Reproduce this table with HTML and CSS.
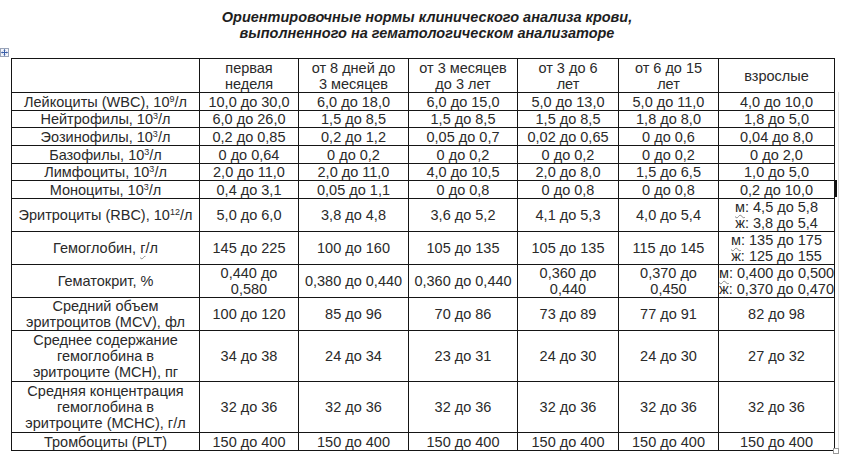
FILE: index.html
```html
<!DOCTYPE html>
<html lang="ru">
<head>
<meta charset="utf-8">
<title>Нормы анализа крови</title>
<link rel="stylesheet" href="styles.css">
</head>
<body>
<div class="page">
  <h1 class="title">Ориентировочные нормы клинического анализа крови,<br>выполненного на гематологическом анализаторе</h1>
  <div class="table-wrap">
    <span class="handle"><svg width="9" height="9" viewBox="0 0 9 9"><rect x="0.5" y="0.5" width="8" height="8" fill="#f4f6fb" stroke="#9aa4b8"/><path d="M4.5 1.5v6M1.5 4.5h6" stroke="#3a5ea8" stroke-width="1"/><path d="M4.5 1.2l-1.3 1.3h2.6zM4.5 7.8l-1.3-1.3h2.6zM1.2 4.5l1.3-1.3v2.6zM7.8 4.5l-1.3-1.3v2.6z" fill="#3a5ea8"/></svg></span>
    <table class="norms">
      <colgroup>
        <col class="c-name"><col class="c1"><col class="c2"><col class="c3"><col class="c4"><col class="c5"><col class="c6">
      </colgroup>
      <tr class="r-head">
        <td></td><td>первая<br>неделя</td><td>от 8 дней до<br>3 месяцев</td><td>от 3 месяцев<br>до 3 лет</td><td>от 3 до 6<br>лет</td><td>от 6 до 15<br>лет</td><td>взрослые</td>
      </tr>
      <tr class="r-a"><td>Лейкоциты (WBC), 10<sup>9</sup>/л</td><td>10,0 до 30,0</td><td>6,0 до 18,0</td><td>6,0 до 15,0</td><td>5,0 до 13,0</td><td>5,0 до 11,0</td><td>4,0 до 10,0</td></tr>
      <tr class="r-b"><td>Нейтрофилы, 10<sup>3</sup>/л</td><td>6,0 до 26,0</td><td>1,5 до 8,5</td><td>1,5 до 8,5</td><td>1,5 до 8,5</td><td>1,8 до 8,0</td><td>1,8 до 5,0</td></tr>
      <tr class="r-a"><td>Эозинофилы, 10<sup>3</sup>/л</td><td>0,2 до 0,85</td><td>0,2 до 1,2</td><td>0,05 до 0,7</td><td>0,02 до 0,65</td><td>0 до 0,6</td><td>0,04 до 8,0</td></tr>
      <tr class="r-a"><td>Базофилы, 10<sup>3</sup>/л</td><td>0 до 0,64</td><td>0 до 0,2</td><td>0 до 0,2</td><td>0 до 0,2</td><td>0 до 0,2</td><td>0 до 2,0</td></tr>
      <tr class="r-b"><td>Лимфоциты, 10<sup>3</sup>/л</td><td>2,0 до 11,0</td><td>2,0 до 11,0</td><td>4,0 до 10,5</td><td>2,0 до 8,0</td><td>1,5 до 6,5</td><td>1,0 до 5,0</td></tr>
      <tr class="r-a"><td>Моноциты, 10<sup>3</sup>/л</td><td>0,4 до 3,1</td><td>0,05 до 1,1</td><td>0 до 0,8</td><td>0 до 0,8</td><td>0 до 0,8</td><td>0,2 до 10,0</td></tr>
      <tr class="r-2"><td>Эритроциты (RBC), 10<sup>12</sup>/л</td><td>5,0 до 6,0</td><td>3,8 до 4,8</td><td>3,6 до 5,2</td><td>4,1 до 5,3</td><td>4,0 до 5,4</td><td><span class="sq">м</span>: 4,5 до 5,8<br><span class="sq">ж</span>: 3,8 до 5,4</td></tr>
      <tr class="r-2"><td>Гемоглобин, <span class="sq">г</span>/л</td><td>145 до 225</td><td>100 до 160</td><td>105 до 135</td><td>105 до 135</td><td>115 до 145</td><td><span class="sq">м</span>: 135 до 175<br><span class="sq">ж</span>: 125 до 155</td></tr>
      <tr class="r-2b"><td>Гематокрит, %</td><td>0,440 до<br>0,580</td><td>0,380 до 0,440</td><td>0,360 до 0,440</td><td>0,360 до<br>0,440</td><td>0,370 до<br>0,450</td><td><span class="sq">м</span>: 0,400 до 0,500<br><span class="sq">ж</span>: 0,370 до 0,470</td></tr>
      <tr class="r-2c"><td>Средний объем<br>эритроцитов (MCV), фл</td><td>100 до 120</td><td>85 до 96</td><td>70 до 86</td><td>73 до 89</td><td>77 до 91</td><td>82 до 98</td></tr>
      <tr class="r-3"><td>Среднее содержание<br>гемоглобина в<br>эритроците (MCH), пг</td><td>34 до 38</td><td>24 до 34</td><td>23 до 31</td><td>24 до 30</td><td>24 до 30</td><td>27 до 32</td></tr>
      <tr class="r-3"><td>Средняя концентрация<br>гемоглобина в<br>эритроците (MCHC), г/л</td><td>32 до 36</td><td>32 до 36</td><td>32 до 36</td><td>32 до 36</td><td>32 до 36</td><td>32 до 36</td></tr>
      <tr class="r-last"><td>Тромбоциты (PLT)</td><td>150 до 400</td><td>150 до 400</td><td>150 до 400</td><td>150 до 400</td><td>150 до 400</td><td>150 до 400</td></tr>
    </table>
    <span class="cursor"></span>
    <span class="edge"></span>
    <span class="resize"></span>
  </div>
</div>
</body>
</html>
```

FILE: styles.css
```css
html, body {
  margin: 0;
  padding: 0;
  background: #ffffff;
}

.page {
  width: 841px;
  height: 457px;
  overflow: hidden;
  font-family: "Liberation Sans", Arial, sans-serif;
  color: #2a2a2a;
}

.title {
  margin: 0;
  padding: 9px 0 0 13px;
  font-size: 14.5px;
  line-height: 16px;
  font-weight: bold;
  font-style: italic;
  text-align: center;
  color: #1e1e1e;
  height: 58px;
  box-sizing: border-box;
}

.table-wrap {
  position: relative;
  margin-left: 11px;
  width: 824px;
}

.norms {
  border-collapse: collapse;
  table-layout: fixed;
  width: 824px;
  font-size: 14.5px;
  line-height: 16px;
}

.c-name { width: 188px; }
.c1 { width: 99px; }
.c2 { width: 110px; }
.c3 { width: 109px; }
.c4 { width: 101px; }
.c5 { width: 100px; }
.c6 { width: 116px; }

.norms td {
  border: 1px solid #151515;
  padding: 0;
  text-align: center;
  vertical-align: middle;
  white-space: nowrap;
  overflow: hidden;
}

.norms sup {
  font-size: 9px;
  line-height: 0;
  vertical-align: 5px;
}

.r-head { height: 34px; }
.r-a { height: 18px; }
.r-b { height: 17px; }
.r-2 { height: 32px; }
.r-2b { height: 31px; }
.r-2c { height: 33px; }
.r-3 { height: 51px; }
.r-last { height: 18px; }

.sq {
  text-decoration: underline wavy #8a8a8a;
  text-decoration-thickness: 1px;
  text-underline-offset: 2px;
}

.handle {
  position: absolute;
  left: -11px;
  top: -10px;
  width: 9px;
  height: 9px;
  line-height: 0;
}

.cursor {
  position: absolute;
  left: 824px;
  top: 122px;
  width: 2px;
  height: 17px;
  background: #111;
}

.edge {
  position: absolute;
  left: 827px;
  top: 34px;
  width: 1px;
  height: 356px;
  background: #dcdcdc;
}

.resize {
  position: absolute;
  left: 822px;
  top: 390px;
  width: 4px;
  height: 4px;
  border: 1px solid #9a9a9a;
  background: #fff;
}
```
